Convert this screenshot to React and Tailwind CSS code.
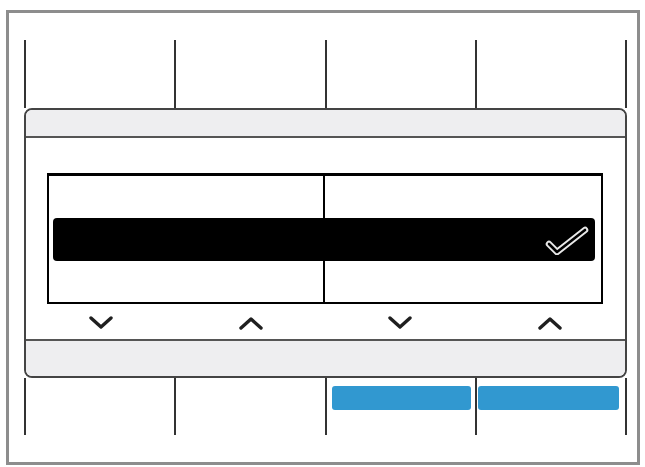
import React from 'react';

function Chevron({ up }) {
  return (
    <svg width="26" height="14" viewBox="0 0 26 14" fill="none">
      <polyline
        points={up ? '3,12 13,3 23,12' : '3,2 13,11 23,2'}
        stroke="#1f1f1f"
        strokeWidth="3.4"
        strokeLinecap="round"
        strokeLinejoin="round"
      />
    </svg>
  );
}

function Check() {
  return (
    <svg width="44" height="30" viewBox="0 0 44 30" fill="none">
      <polyline points="4,19 12,27 40,5" stroke="#e8e8e8" strokeWidth="6.5" strokeLinecap="round" strokeLinejoin="round" />
      <polyline points="4,19 12,27 40,5" stroke="#000" strokeWidth="2.6" strokeLinecap="round" strokeLinejoin="round" />
    </svg>
  );
}

export default function App() {
  return (
    <div className="w-[645px] h-[467px] bg-white overflow-hidden pt-[10px] pl-[6px]">
      <div className="w-[634px] h-[455px] border-[3px] border-[#8d8d8d] pl-[15px] pt-[27px]">
        {/* columns above the sheet */}
        <div className="grid grid-cols-4 w-[603px] h-[68px] border-r-2 border-[#333]">
          <div className="border-l-2 border-[#333]" />
          <div className="border-l-2 border-[#333]" />
          <div className="border-l-2 border-[#333]" />
          <div className="border-l-2 border-[#333]" />
        </div>

        {/* sheet */}
        <div className="w-[603px] h-[270px] border-2 border-[#444] rounded-[8px] overflow-hidden bg-white flex flex-col">
          <div className="h-[28px] bg-[#eeeef0] border-b-2 border-[#555]" />
          <div className="h-[201px] pt-[35px]">
            <div className="ml-[21px] w-[556px] border-t-[3px] border-x-2 border-b-2 border-black">
              <div className="grid grid-cols-2 h-[42px]">
                <div className="border-r-2 border-black" />
                <div />
              </div>
              <div className="h-[43px] ml-[4px] mr-[6px] bg-black rounded-[4px] flex items-center justify-end pr-[6px]">
                <Check />
              </div>
              <div className="grid grid-cols-2 h-[41px]">
                <div className="border-r-2 border-black" />
                <div />
              </div>
            </div>
            <div className="grid grid-cols-4 h-[35px] items-center justify-items-center pt-[2px]">
              <Chevron />
              <Chevron up />
              <Chevron />
              <Chevron up />
            </div>
          </div>
          <div className="flex-1 bg-[#eeeef0] border-t-2 border-[#555]" />
        </div>

        {/* columns below the sheet */}
        <div className="grid grid-cols-4 w-[603px] h-[57px] border-r-2 border-[#333]">
          <div className="border-l-2 border-[#333]" />
          <div className="border-l-2 border-[#333]" />
          <div className="border-l-2 border-[#333] pt-[8px] pl-[5px] pr-[4px]">
            <div className="h-[24px] bg-[#3198d0] rounded-[3px]" />
          </div>
          <div className="border-l-2 border-[#333] pt-[8px] pl-[1px] pr-[6px]">
            <div className="h-[24px] bg-[#3198d0] rounded-[3px]" />
          </div>
        </div>
      </div>
    </div>
  );
}
